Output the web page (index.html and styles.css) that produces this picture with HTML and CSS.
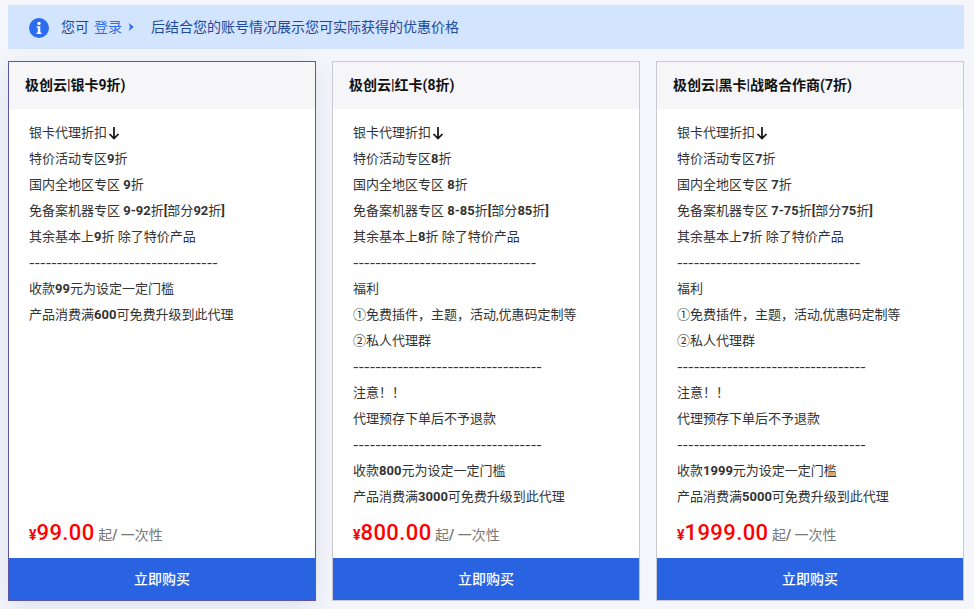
FILE: index.html
```html
<!DOCTYPE html>
<html lang="zh-CN">
<head>
<meta charset="utf-8">
<title>代理价格</title>
<link rel="stylesheet" href="styles.css">
</head>
<body>
<div class="alert">
  <svg class="info" viewBox="0 0 20 20" width="20" height="20"><circle cx="10" cy="10" r="10" fill="#2b6cf0"/><circle cx="10" cy="5.4" r="1.7" fill="#fff"/><path d="M7.6 8.2h3.7v6.2h1.2v1.6H7.6v-1.6h1.2V9.8H7.6z" fill="#fff"/></svg>
  <span class="msg">您可</span>
  <a class="login">登录</a>
  <svg class="chev" viewBox="0 0 6 8" width="6" height="8"><path d="M.6 0 5.8 4 .6 8 2 4z" fill="#2b6cf0"/></svg>
  <span class="msg rest">后结合您的账号情况展示您可实际获得的优惠价格</span>
</div>
<div class="cards">
  <section class="card active">
    <h3 class="head">极创云|银卡9折)</h3>
    <div class="body">
      <p>银卡代理折扣<svg class="down" viewBox="0 0 12 14" width="12" height="14"><path d="M6 1v11.5M1.5 8 6 12.5 10.5 8" fill="none" stroke="#111" stroke-width="1.7"/></svg></p>
      <p>特价活动专区<b>9</b>折</p>
      <p>国内全地区专区 <b>9</b>折</p>
      <p>免备案机器专区 <b>9-92</b>折<b>[</b>部分<b>92</b>折<b>]</b></p>
      <p>其余基本上<b>9</b>折 除了特价产品</p>
      <p class="dash">----------------------------------</p>
      <p>收款<b>99</b>元为设定一定门槛</p>
      <p>产品消费满<b>600</b>可免费升级到此代理</p>
    </div>
    <div class="price"><span class="cur">¥</span><span class="num">99.00</span><span class="unit"> 起<b>/</b> 一次性</span></div>
    <a class="buy">立即购买</a>
  </section>
  <section class="card">
    <h3 class="head">极创云|红卡(8折)</h3>
    <div class="body">
      <p>银卡代理折扣<svg class="down" viewBox="0 0 12 14" width="12" height="14"><path d="M6 1v11.5M1.5 8 6 12.5 10.5 8" fill="none" stroke="#111" stroke-width="1.7"/></svg></p>
      <p>特价活动专区<b>8</b>折</p>
      <p>国内全地区专区 <b>8</b>折</p>
      <p>免备案机器专区 <b>8-85</b>折<b>[</b>部分<b>85</b>折<b>]</b></p>
      <p>其余基本上<b>8</b>折 除了特价产品</p>
      <p class="dash">---------------------------------</p>
      <p>福利</p>
      <p>①免费插件，主题，活动,优惠码定制等</p>
      <p>②私人代理群</p>
      <p class="dash">----------------------------------</p>
      <p>注意！！</p>
      <p>代理预存下单后不予退款</p>
      <p class="dash">----------------------------------</p>
      <p>收款<b>800</b>元为设定一定门槛</p>
      <p>产品消费满<b>3000</b>可免费升级到此代理</p>
    </div>
    <div class="price"><span class="cur">¥</span><span class="num">800.00</span><span class="unit"> 起<b>/</b> 一次性</span></div>
    <a class="buy">立即购买</a>
  </section>
  <section class="card">
    <h3 class="head">极创云|黑卡|战略合作商(7折)</h3>
    <div class="body">
      <p>银卡代理折扣<svg class="down" viewBox="0 0 12 14" width="12" height="14"><path d="M6 1v11.5M1.5 8 6 12.5 10.5 8" fill="none" stroke="#111" stroke-width="1.7"/></svg></p>
      <p>特价活动专区<b>7</b>折</p>
      <p>国内全地区专区 <b>7</b>折</p>
      <p>免备案机器专区 <b>7-75</b>折<b>[</b>部分<b>75</b>折<b>]</b></p>
      <p>其余基本上<b>7</b>折 除了特价产品</p>
      <p class="dash">---------------------------------</p>
      <p>福利</p>
      <p>①免费插件，主题，活动,优惠码定制等</p>
      <p>②私人代理群</p>
      <p class="dash">----------------------------------</p>
      <p>注意！！</p>
      <p>代理预存下单后不予退款</p>
      <p class="dash">----------------------------------</p>
      <p>收款<b>1999</b>元为设定一定门槛</p>
      <p>产品消费满<b>5000</b>可免费升级到此代理</p>
    </div>
    <div class="price"><span class="cur">¥</span><span class="num">1999.00</span><span class="unit"> 起<b>/</b> 一次性</span></div>
    <a class="buy">立即购买</a>
  </section>
</div>
</body>
</html>
```
FILE: styles.css
```css
* { box-sizing: border-box; }
html, body { height: 100%; }
body {
  margin: 0;
  padding: 5px 10px 0 8px;
  height: 609px;
  overflow: hidden;
  background: #f5f6fb;
  font-family: Roboto, "Noto Sans CJK SC", sans-serif;
  font-size: 13px;
  color: #333;
}
.alert {
  display: flex;
  align-items: center;
  height: 44px;
  padding: 0 0 3px 21px;
  background: #d3e4ff;
  color: #1f4a98;
  font-size: 14px;
}
.info { margin: 5px 12px 0 0; }
.login { margin-left: 5px; color: #2b6cf0; }
.chev { margin: 3px 0 0 6px; }
.rest { margin-left: 17px; }
.cards {
  display: grid;
  grid-template-columns: repeat(3, 308px);
  gap: 16px;
  margin-top: 12px;
}
.card {
  display: flex;
  flex-direction: column;
  height: 540px;
  background: #fff;
  border: 1px solid #c9c9d6;
}
.card.active {
  border-color: #5b57a6;
  box-shadow: 0 6px 24px rgba(60, 70, 130, .12);
}
.head {
  margin: 0;
  height: 47px;
  padding-left: 16px;
  background: #f6f6f9;
  color: #111;
  font-size: 14px;
  font-weight: 700;
  line-height: 47px;
}
.body { flex: 1; padding: 11px 20px 0; }
.body p { margin: 0; height: 26px; line-height: 26px; white-space: nowrap; }
.body b { font-weight: 700; }
.body .dash { font-family: "Noto Sans CJK SC", sans-serif; font-size: 16px; line-height: 22px; }
.down { vertical-align: -3px; margin-left: 1px; }
.price { padding: 0 20px 6px; line-height: 32px; white-space: nowrap; }
.cur { color: #f00; font-size: 14px; font-weight: 700; }
.num { color: #f00; font-size: 22px; font-weight: 500; letter-spacing: .4px; }
.unit { color: #777; font-size: 14px; }
.unit b { font-weight: 700; }
.buy {
  display: block;
  height: 42px;
  background: #2a63e2;
  color: #fff;
  font-size: 14px;
  font-weight: 500;
  line-height: 42px;
  text-align: center;
}
```
